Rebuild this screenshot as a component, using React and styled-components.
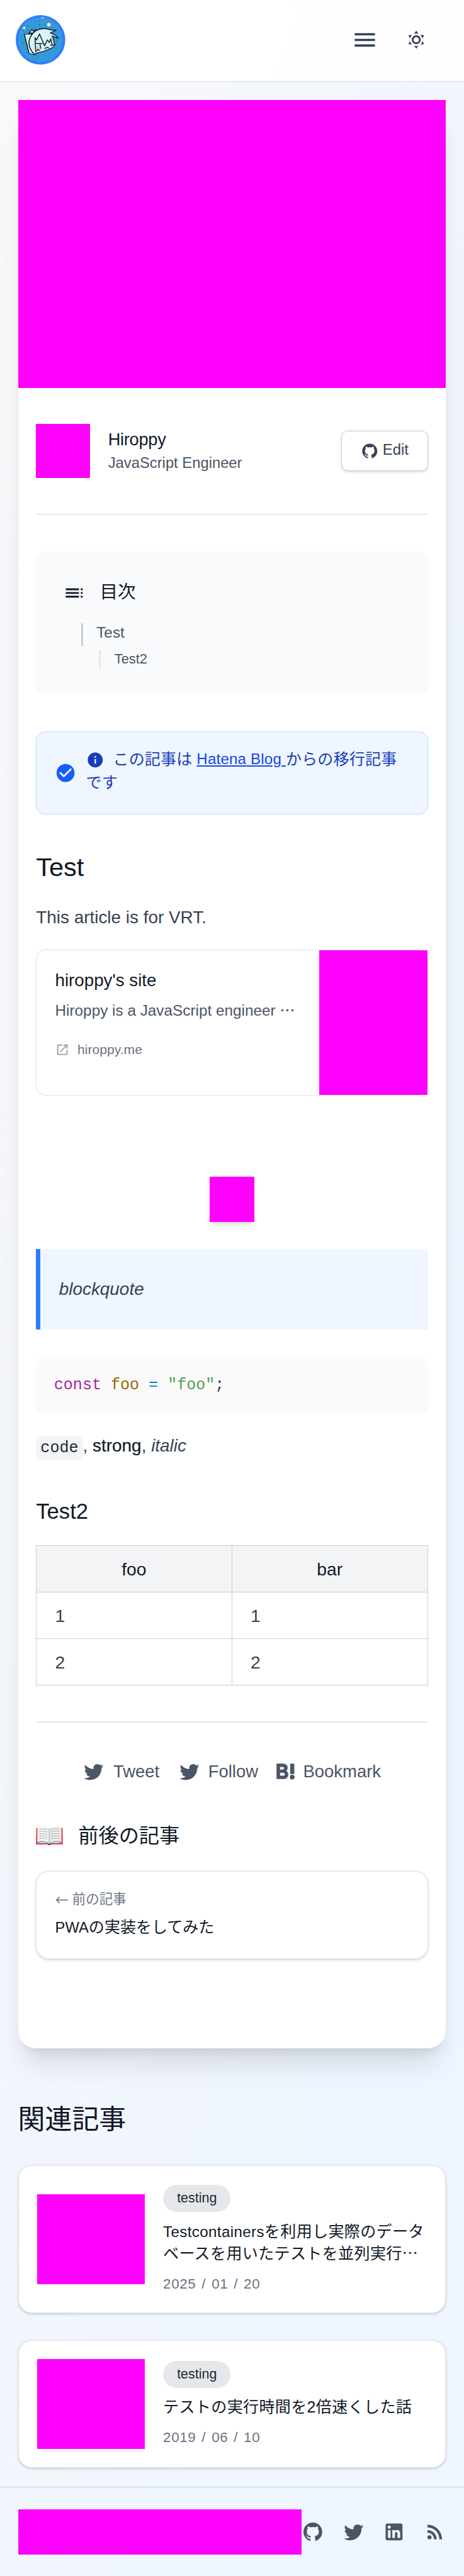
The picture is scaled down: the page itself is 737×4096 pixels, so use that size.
import React from "react";
import styled, { createGlobalStyle, css } from "styled-components";
import { MdMenu, MdToc, MdCheckCircle, MdInfo, MdOpenInNew, MdRssFeed } from "react-icons/md";

/* design units (16 to the rem) */
const r = (n) => `${n / 16}rem`;

const c = {
  ink: "#101828",
  dark: "#364153",
  mid: "#4a5565",
  soft: "#6a7282",
  line: "#e5e7eb",
  edge: "#dfe1e6",
  rule: "#c8cdd5",
  block: "#ff00ff",
};

const Global = createGlobalStyle`
  html { font-size: 28.6213px; }
  *, *::before, *::after { box-sizing: border-box; }
  body {
    margin: 0;
    font-family: "Liberation Sans", "Noto Sans CJK JP", sans-serif;
    font-size: ${r(16)};
    color: ${c.ink};
    -webkit-font-smoothing: antialiased;
  }
  h1, h2, h3, h4, p, pre, blockquote, ul { margin: 0; padding: 0; font-weight: 400; }
  ul { list-style: none; }
  a { color: inherit; text-decoration: none; }
  svg { display: block; flex: none; }
`;

const Page = styled.div`
  height: 4096px;
  overflow: hidden;
  display: flex;
  flex-direction: column;
  background: linear-gradient(to bottom right, #f9fafb, #f3f6fc 40%, #eff6ff 75%, #eff6ff);
`;

const Header = styled.header`
  display: flex;
  align-items: center;
  flex: none;
  height: ${r(73)};
  padding: 0 ${r(32.8)} ${r(1)} ${r(14)};
  background: rgba(255, 255, 255, 0.9);
  border-bottom: 2px solid ${c.line};
  color: ${c.dark};
`;

const Logo = styled.a`
  width: ${r(44)};
  height: ${r(44)};
  margin-right: auto;
`;

const SunSlot = styled.button`
  all: unset;
  margin-left: ${r(24)};
`;

const Svg = styled.svg`
  width: ${(p) => r(p.$size)};
  height: ${(p) => r(p.$size)};
  fill: currentColor;
`;

const Article = styled.article`
  flex: none;
  height: ${r(1732)};
  margin: ${r(16)} ${r(16)} 0;
  background: #fff;
  border-radius: 0 0 ${r(16)} ${r(16)};
  box-shadow: 0 ${r(20)} ${r(25)} ${r(-5)} rgba(0, 0, 0, 0.1), 0 ${r(8)} ${r(10)} ${r(-6)} rgba(0, 0, 0, 0.1);
`;

const Media = styled.div`
  flex: none;
  width: ${(p) => (p.$w ? r(p.$w) : "auto")};
  height: ${(p) => r(p.$h)};
  background: ${c.block};
`;

const Content = styled.div`
  display: flex;
  flex-direction: column;
  padding: ${r(32)} ${r(16)} 0;
`;

const Author = styled.div`
  display: flex;
  align-items: center;
  height: ${r(48)};
`;

const AuthorText = styled.div`
  flex: 1;
  padding-left: ${r(16)};
`;

const Name = styled.div`
  font-size: ${r(15.2)};
  line-height: ${r(20)};
  letter-spacing: -0.01em;
`;

const Role = styled.div`
  padding-top: ${r(0.5)};
  font-size: ${r(13.3)};
  line-height: ${r(20)};
  color: ${c.mid};
`;

const EditButton = styled.a`
  display: flex;
  align-items: center;
  justify-content: center;
  gap: ${r(3.5)};
  width: ${r(77)};
  height: ${r(36)};
  color: ${c.dark};
  background: #fff;
  border: 1px solid ${c.rule};
  border-radius: ${r(6)};
  box-shadow: 0 ${r(1)} ${r(3)} rgba(0, 0, 0, 0.1), 0 ${r(1)} ${r(2)} ${r(-1)} rgba(0, 0, 0, 0.1);
  font-size: ${r(13.4)};

  span { padding-bottom: ${r(2.4)}; }
`;

const Divider = styled.div`
  height: 2px;
  margin-top: ${(p) => r(p.$top)};
  background: ${c.line};
`;

const Toc = styled.nav`
  margin-top: ${r(31.9)};
  height: ${r(128)};
  padding: ${r(25.5)} ${r(24)} 0;
  background: #f9fafb;
  border-radius: ${r(8)};
`;

const TocTitle = styled.div`
  display: flex;
  align-items: center;
  gap: ${r(12.6)};
  height: ${r(22)};
  font-size: ${r(16)};
  line-height: ${r(22)};
  svg { margin-top: ${r(1.4)}; }
`;

const TocItem = styled.li`
  height: ${(p) => r(p.$h)};
  margin-top: ${(p) => r(p.$top)};
  margin-left: ${(p) => r(p.$indent)};
  padding-left: ${r(12)};
  border-left: ${r(2)} solid ${(p) => p.$bar};
  font-size: ${(p) => r(p.$font)};
  line-height: ${(p) => r(p.$lh)};
  color: ${c.mid};
`;

const Notice = styled.div`
  display: flex;
  align-items: center;
  margin-top: ${r(32)};
  height: ${r(74)};
  padding: 0 ${r(16)};
  background: #eff6ff;
  border: 1px solid #bedbff;
  border-radius: ${r(8)};
  color: #155dfc;
`;

const NoticeText = styled.div`
  height: ${r(44.8)};
  margin-left: ${r(8.6)};
  flex: 1;
  font-size: ${r(14)};
  line-height: ${r(20.6)};
  letter-spacing: ${r(0.1)};
  color: #193cb8;
`;

const NoticeLine = styled.div`
  display: flex;
  align-items: center;
  height: ${r(20.6)};
  white-space: pre;
  svg { margin: ${r(1.6)} ${r(8)} 0 0; }
`;

const NoticeLink = styled.a`
  margin-left: ${r(3.8)};
  color: #1447e6;
  font-size: ${r(13.5)};
  text-decoration: underline;
  text-underline-offset: ${r(1.2)};
`;

const Heading = styled.h2`
  display: flex;
  align-items: center;
  flex: none;
  height: ${(p) => r(p.$h || 28)};
  margin-top: ${(p) => r(p.$top)};
  margin-left: ${(p) => r(p.$left || 0)};
  font-size: ${(p) => r(p.$font)};
  line-height: 1;
`;

const Paragraph = styled.p`
  margin-top: ${(p) => r(p.$top)};
  height: ${r(28)};
  font-size: ${r(15.6)};
  line-height: ${r(28)};
  color: ${c.dark};
  white-space: nowrap;
`;

const LinkCard = styled.a`
  display: flex;
  justify-content: space-between;
  height: ${r(130)};
  margin-top: ${r(14.5)};
  border: 1px solid ${c.edge};
  border-radius: ${r(8)};
  & > ${Media} { height: ${r(129)}; }
`;

const LinkBody = styled.div`
  padding: ${r(17)} 0 0 ${r(16.4)};
`;

const LinkTitle = styled.div`
  font-size: ${r(15.5)};
  line-height: ${r(20)};
`;

const LinkText = styled.div`
  margin-top: ${r(6.6)};
  font-size: ${r(13.6)};
  line-height: ${r(20)};
  white-space: nowrap;
  color: ${c.mid};
`;

const LinkHost = styled.div`
  display: flex;
  align-items: center;
  gap: ${r(7.4)};
  margin-top: ${r(17.2)};
  height: ${r(16)};
  font-size: ${r(11.8)};
  line-height: ${r(16)};
  color: ${c.soft};
  svg { color: #99a1af; }
`;

const Figure = styled.div`
  align-self: center;
  margin-top: ${r(72)};
  box-shadow: 0 ${r(4)} ${r(6)} ${r(-1)} rgba(0, 0, 0, 0.12), 0 ${r(2)} ${r(4)} ${r(-2)} rgba(0, 0, 0, 0.1);
`;

const Quote = styled.blockquote`
  height: ${r(72)};
  margin-top: ${r(24)};
  padding-left: ${r(16.5)};
  border-left: ${r(4)} solid #2b7fff;
  background: #eff6ff;
  font-size: ${r(15.6)};
  line-height: ${r(72)};
  font-style: italic;
  color: ${c.dark};
`;

const Pre = styled.pre`
  height: ${r(52)};
  margin-top: ${r(24)};
  padding: 0 ${r(16)};
  border-radius: ${r(8)};
  background: #fafafa;
  color: #383a42;
  font-family: "Liberation Mono", monospace;
  font-size: ${r(14)};
  line-height: ${r(51.4)};
`;

const Tok = styled.span`
  color: ${(p) => p.$c};
`;

const Code = styled.code`
  padding: ${r(2)} ${r(4)} ${r(3)};
  border-radius: ${r(4)};
  background: #f3f4f6;
  color: #1e2939;
  font-family: "Liberation Mono", monospace;
  font-size: ${r(14)};
`;

const Strong = styled.strong`
  font-weight: 400;
  color: ${c.ink};
  -webkit-text-stroke: 0.2px ${c.ink};
`;

const Table = styled.div`
  display: grid;
  grid-template-columns: ${r(173.5)} 1fr;
  margin-top: ${r(16.3)};
  height: ${r(124.2)};
  grid-template-rows: repeat(3, 1fr);
  border: solid ${c.rule};
  border-width: 1px 0 0 1px;
`;

const Cell = styled.div`
  display: flex;
  align-items: center;
  padding: ${r(1)} ${r(16.4)} 0;
  border: solid ${c.rule};
  border-width: 0 1px 1px 0;
  font-size: ${r(15.8)};
  color: ${c.dark};
  ${(p) => p.$head && css`
    justify-content: center;
    background: #f3f4f6;
    color: ${c.ink};
  `}
`;

const Share = styled.div`
  display: flex;
  align-items: center;
  margin-top: ${r(31.8)};
  height: ${r(24)};
  padding-left: ${r(41)};
  color: ${c.mid};
  font-size: ${r(15.35)};
`;

const ShareLink = styled.a`
  display: flex;
  align-items: center;
  gap: ${(p) => r(p.$gap)};
  width: ${(p) => r(p.$w)};
  white-space: nowrap;
`;

const PrevCard = styled.a`
  height: ${r(78.3)};
  margin-top: ${r(17.3)};
  padding: ${r(15.9)} ${r(16.4)} 0;
  border: 1px solid ${c.edge};
  border-radius: ${r(12)};
  box-shadow: 0 ${r(1)} ${r(3)} rgba(0, 0, 0, 0.12), 0 ${r(1)} ${r(2)} ${r(-1)} rgba(0, 0, 0, 0.12);
`;

const PrevLabel = styled.div`
  display: flex;
  align-items: center;
  gap: ${r(3.2)};
  height: ${r(18)};
  font-size: ${r(12)};
  line-height: ${r(18)};
  color: ${c.soft};
`;

const Arrow = styled.span`
  font-family: "Noto Sans CJK JP", sans-serif;
`;

const PrevTitle = styled.div`
  margin-top: ${r(5.8)};
  font-size: ${r(14)};
  line-height: ${r(20)};
`;

const Latin = styled.span`
  font-size: ${(p) => p.$size || 0.95}em;
`;

const Card = styled.a`
  display: flex;
  align-items: center;
  flex: none;
  height: ${(p) => r(p.$h)};
  margin: ${(p) => r(p.$top)} ${r(16)} 0;
  padding: 0 ${r(16.3)};
  background: #fff;
  border: 1px solid ${c.edge};
  border-radius: ${r(12)};
  box-shadow: 0 ${r(1)} ${r(3)} rgba(0, 0, 0, 0.12), 0 ${r(1)} ${r(2)} ${r(-1)} rgba(0, 0, 0, 0.12);
`;

const CardBody = styled.div`
  display: flex;
  flex-direction: column;
  align-items: flex-start;
  margin-left: ${r(16)};
`;

const Badge = styled.span`
  display: flex;
  align-items: center;
  justify-content: center;
  width: ${r(60)};
  height: ${r(24)};
  border-radius: ${r(12)};
  background: ${c.line};
  color: #1e2939;
  font-size: ${r(12)};
`;

const CardTitle = styled.div`
  margin-top: ${r(7.4)};
  font-size: ${r(14)};
  line-height: ${r(20)};
  letter-spacing: ${r(0.2)};
  white-space: nowrap;
`;

const DateText = styled.div`
  margin-top: ${r(9)};
  font-size: ${r(12.5)};
  line-height: ${r(16)};
  letter-spacing: ${r(0.35)};
  word-spacing: ${r(1.2)};
  color: ${c.soft};
`;

const Footer = styled.footer`
  display: flex;
  align-items: center;
  margin-top: ${r(16.4)};
  border-top: 3px solid ${c.line};
  height: ${r(80)};
  padding: 0 ${r(16)};
  color: ${c.mid};
`;

const Social = styled.div`
  display: flex;
  gap: ${r(16)};
`;

const P = {
  github:
    "M12,2A10,10 0 0,0 2,12C2,16.42 4.87,20.17 8.84,21.5C9.34,21.58 9.5,21.27 9.5,21C9.5,20.77 9.5,20.14 9.5,19.31C6.73,19.91 6.14,17.97 6.14,17.97C5.68,16.81 5.03,16.5 5.03,16.5C4.12,15.88 5.1,15.9 5.1,15.9C6.1,15.97 6.63,16.93 6.63,16.93C7.5,18.45 8.97,18 9.54,17.76C9.63,17.11 9.89,16.67 10.17,16.42C7.95,16.17 5.62,15.31 5.62,11.5C5.62,10.39 6,9.5 6.65,8.79C6.55,8.54 6.2,7.5 6.75,6.15C6.75,6.15 7.59,5.88 9.5,7.17C10.29,6.95 11.15,6.84 12,6.84C12.85,6.84 13.71,6.95 14.5,7.17C16.41,5.88 17.25,6.15 17.25,6.15C17.8,7.5 17.45,8.54 17.35,8.79C18,9.5 18.38,10.39 18.38,11.5C18.38,15.32 16.04,16.16 13.81,16.41C14.17,16.72 14.5,17.33 14.5,18.26C14.5,19.6 14.5,20.68 14.5,21C14.5,21.27 14.66,21.59 15.17,21.5C19.14,20.16 22,16.42 22,12A10,10 0 0,0 12,2Z",
  twitter:
    "M22.46,6C21.69,6.35 20.86,6.58 20,6.69C20.88,6.16 21.56,5.32 21.88,4.31C21.05,4.81 20.13,5.16 19.16,5.36C18.37,4.5 17.26,4 16,4C13.65,4 11.73,5.92 11.73,8.29C11.73,8.63 11.77,8.96 11.84,9.27C8.28,9.09 5.11,7.38 3,4.79C2.63,5.42 2.42,6.16 2.42,6.94C2.42,8.43 3.17,9.75 4.33,10.5C3.62,10.5 2.96,10.3 2.38,10C2.38,10 2.38,10 2.38,10.03C2.38,12.11 3.86,13.85 5.82,14.24C5.46,14.34 5.08,14.39 4.69,14.39C4.42,14.39 4.15,14.36 3.89,14.31C4.43,16 6,17.26 7.89,17.29C6.43,18.45 4.58,19.13 2.56,19.13C2.22,19.13 1.88,19.11 1.54,19.07C3.44,20.29 5.7,21 8.12,21C16,21 20.33,14.46 20.33,8.79C20.33,8.6 20.33,8.42 20.32,8.23C21.16,7.63 21.88,6.87 22.46,6Z",
  linkedin:
    "M19 3A2 2 0 0 1 21 5V19A2 2 0 0 1 19 21H5A2 2 0 0 1 3 19V5A2 2 0 0 1 5 3H19M18.5 18.5V13.2A3.26 3.26 0 0 0 15.24 9.94C14.39 9.94 13.4 10.46 12.92 11.24V10.13H10.13V18.5H12.92V13.57C12.92 12.8 13.54 12.17 14.31 12.17A1.4 1.4 0 0 1 15.71 13.57V18.5H18.5M6.88 8.56A1.68 1.68 0 0 0 8.56 6.88C8.56 5.95 7.81 5.19 6.88 5.19A1.69 1.69 0 0 0 5.19 6.88C5.19 7.81 5.95 8.56 6.88 8.56M8.27 18.5V10.13H5.5V18.5H8.27Z",
  sun:
    "M12,7A5,5 0 0,1 17,12A5,5 0 0,1 12,17A5,5 0 0,1 7,12A5,5 0 0,1 12,7M12,9A3,3 0 0,0 9,12A3,3 0 0,0 12,15A3,3 0 0,0 15,12A3,3 0 0,0 12,9M12,2L14.39,5.42C13.65,5.15 12.84,5 12,5C11.16,5 10.35,5.15 9.61,5.42L12,2M3.34,7L7.5,6.65C6.9,7.16 6.36,7.78 5.94,8.5C5.5,9.24 5.25,10 5.11,10.79L3.34,7M3.36,17L5.12,13.23C5.26,14 5.53,14.78 5.95,15.5C6.37,16.24 6.91,16.86 7.5,17.37L3.36,17M20.65,7L18.88,10.79C18.74,10 18.47,9.23 18.05,8.5C17.63,7.78 17.1,7.15 16.5,6.64L20.65,7M20.64,17L16.5,17.36C17.09,16.85 17.62,16.22 18.04,15.5C18.46,14.77 18.73,14 18.87,13.21L20.64,17M12,22L9.59,18.56C10.33,18.83 11.14,19 12,19C12.82,19 13.63,18.83 14.37,18.56L12,22Z",
};

const Icon = ({ name, size }) => (
  <Svg viewBox="0 0 24 24" $size={size} aria-hidden="true">
    <path d={P[name]} />
  </Svg>
);

const HatenaIcon = () => (
  <Svg viewBox="0 0 20 20" $size={20} aria-hidden="true">
    <text x="1.1" y="16.4" fontFamily="Liberation Sans" fontWeight="700" fontSize="18.6" textLength="11.4" lengthAdjust="spacingAndGlyphs" stroke="currentColor" strokeWidth="0.9">B</text>
    <rect x="13.9" y="3" width="3.7" height="9.2" />
    <circle cx="15.75" cy="15" r="2.1" />
  </Svg>
);

const Avatar = () => (
  <Svg viewBox="110 80 346 346" $size={44} aria-hidden="true">
    <circle cx="283" cy="253" r="173" fill="#2b7fff" />
    <circle cx="283" cy="253" r="157" fill="#3498db" />
    <g fill="#dff2f2" stroke="#6a8c96" strokeWidth="4">
      <circle cx="169" cy="170" r="11" />
      <circle cx="341" cy="147" r="15" />
      <path d="M280 97 Q296 114 313 99 L313 97Z" />
    </g>
    <g fill="#2f6f97">
      <circle cx="194" cy="156" r="5" /><circle cx="163" cy="188" r="5" /><circle cx="278" cy="115" r="4" />
      <circle cx="277" cy="147" r="5" /><circle cx="351" cy="168" r="4" /><circle cx="161" cy="274" r="5" />
      <circle cx="396" cy="266" r="5" />
    </g>
    <g fill="#d5f3f8" stroke="#1b2a30" strokeWidth="7" strokeLinejoin="round" strokeLinecap="round">
      <path d="M201 206 L222 182 L236 194 L246 182 L255 184 L240 206Z" />
      <path d="M202 346 L170 214 L218 214 L240 200 L250 340 L243 358Z" strokeWidth="5" />
      <path d="M243 358 Q190 305 206 248 Q235 172 318 174 L350 182 L392 186 L352 204 Q400 222 406 243 L364 226 Q380 262 382 292 Q370 318 252 347Z" />
    </g>
    <path d="M252 300 Q280 290 284 320 L258 342Z M350 290 Q360 262 378 290 L365 306Z" fill="#dcc3df" />
    <path d="M202 346 L170 214 M244 236 L250 340 M244 236 L255 254 L276 212 L311 295 L331 253 L345 272 L354 246 L364 284 M250 279 L297 279 M278 279 L286 315 M256 330 Q266 315 278 328 M312 317 Q326 298 342 312 M352 292 L386 286" fill="none" stroke="#1b2a30" strokeWidth="7" strokeLinejoin="round" />
  </Svg>
);

const BookIcon = () => (
  <Svg viewBox="0 -3.5 24 24" $size={24} aria-hidden="true">
    <path d="M0.4 1.3 L1.5 1 V14.6 L11 14.8 H13 L22.5 14.6 V1 L23.6 1.3 L24 16 L13.2 16 Q12 17 10.8 16 L0 16Z" fill="#e53935" />
    <path d="M1 14.9 Q7 12.6 11.6 15.6 H12.4 Q17 12.6 23 14.9 L22.6 12 H1.4Z" fill="#5bbad0" />
    <path d="M10.7 15.4 H13.3 L12.8 16.6 H11.2Z" fill="#4e4340" />
    <path d="M1.5 0.8 Q7.5 -1 12 1.6 V14.8 Q7 11.6 1.3 13.6Z" fill="#f5f5f5" />
    <path d="M22.5 0.8 Q16.5 -1 12 1.6 V14.8 Q17 11.6 22.7 13.6Z" fill="#ededed" />
    <path d="M11.3 1.4 L12 1.8 L12.7 1.4 V14.4 L12 14.8 L11.3 14.4Z" fill="#c9c9c9" />
    <path d="M3 2.6 Q7 1.4 10.4 2.9 M3 4.7 Q7 3.5 10.4 5 M3 6.8 Q7 5.6 10.4 7.1 M3 8.9 Q7 7.7 10.4 9.2 M3 11 Q7 9.8 10.4 11.3 M13.6 2.9 Q17 1.4 21 2.6 M13.6 5 Q17 3.5 21 4.7 M13.6 7.1 Q17 5.6 21 6.8 M13.6 9.2 Q17 7.7 21 8.9 M13.6 11.3 Q17 9.8 21 11" fill="none" stroke="#a9a9a9" strokeWidth="0.6" strokeDasharray="2.2 0.4" />
  </Svg>
);

const BookSlot = styled.span`
  width: ${r(37.5)};
  padding-top: ${r(1)};
`;

export default function App() {
  return (
    <>
      <Global />
      <Page lang="ja">
        <Header>
          <Logo href="#"><Avatar /></Logo>
          <MdMenu size="1.5rem" />
          <SunSlot aria-label="theme"><Icon name="sun" size={19.2} /></SunSlot>
        </Header>

        <Article>
          <Media $h={256} />
          <Content>
            <Author>
              <Media $w={48} $h={48} />
              <AuthorText>
                <Name>Hiroppy</Name>
                <Role>JavaScript Engineer</Role>
              </AuthorText>
              <EditButton href="#"><Icon name="github" size={16} /><span>Edit</span></EditButton>
            </Author>
            <Divider $top={32} />

            <Toc>
              <TocTitle><MdToc size="1.25rem" color={c.ink} />目次</TocTitle>
              <ul>
                <TocItem $h={20.3} $lh={17.2} $top={16.5} $indent={16} $bar={c.rule} $font={13.6}>Test</TocItem>
                <TocItem $h={16} $lh={15.6} $top={3.8} $indent={32} $bar={c.line} $font={12.2}>Test2</TocItem>
              </ul>
            </Toc>

            <Notice>
              <MdCheckCircle size="1.2rem" />
              <NoticeText>
                <NoticeLine>
                  <MdInfo size="1rem" />
                  <span>この記事は</span>
                  <NoticeLink href="#">Hatena Blog </NoticeLink>
                  <span>からの移行記事</span>
                </NoticeLine>
                <NoticeLine>です</NoticeLine>
              </NoticeText>
            </Notice>

            <Heading $top={31} $h={32} $font={23.2}>Test</Heading>
            <Paragraph $top={14.5}>This article is for VRT.</Paragraph>

            <LinkCard href="#">
              <LinkBody>
                <LinkTitle>hiroppy's site</LinkTitle>
                <LinkText>Hiroppy is a JavaScript engineer ⋯</LinkText>
                <LinkHost><MdOpenInNew size="0.78rem" />hiroppy.me</LinkHost>
              </LinkBody>
              <Media $w={96} $h={129} />
            </LinkCard>

            <Figure><Media $w={40} $h={40} /></Figure>
            <Quote>blockquote</Quote>
            <Pre><Tok $c="#a626a4">const</Tok> <Tok $c="#986801">foo</Tok> <Tok $c="#0184bc">=</Tok> <Tok $c="#50a14f">"foo"</Tok>;</Pre>
            <Paragraph $top={13.5}><Code>code</Code>, <Strong>strong</Strong>, <em>italic</em></Paragraph>

            <Heading as="h3" $top={30} $font={19.4}>Test2</Heading>
            <Table>
              <Cell $head>foo</Cell><Cell $head>bar</Cell>
              <Cell>1</Cell><Cell>1</Cell>
              <Cell>2</Cell><Cell>2</Cell>
            </Table>

            <Divider $top={32} />
            <Share>
              <ShareLink href="#" $w={85} $gap={7.6}><Icon name="twitter" size={20} />Tweet</ShareLink>
              <ShareLink href="#" $w={86} $gap={6.9}><Icon name="twitter" size={20} />Follow</ShareLink>
              <ShareLink href="#" $w={100} $gap={5.2}><HatenaIcon />Bookmark</ShareLink>
            </Share>

            <Heading as="h4" $top={31} $font={18}><BookSlot><BookIcon /></BookSlot>前後の記事</Heading>
            <PrevCard href="#">
              <PrevLabel><Arrow>←</Arrow><span>前の記事</span></PrevLabel>
              <PrevTitle><Latin>PWA</Latin>の実装をしてみた</PrevTitle>
            </PrevCard>
          </Content>
        </Article>

        <Heading $top={47} $h={32} $left={16} $font={24}>関連記事</Heading>
        <Card href="#" $top={25} $h={131}>
          <Media $w={96} $h={80} />
          <CardBody>
            <Badge>testing</Badge>
            <CardTitle><Latin $size={0.965}>Testcontainers</Latin>を利用し実際のデータ<br />ベースを用いたテストを並列実行⋯</CardTitle>
            <DateText>2025 / 01 / 20</DateText>
          </CardBody>
        </Card>
        <Card href="#" $top={24} $h={113.6}>
          <Media $w={96} $h={80} />
          <CardBody>
            <Badge>testing</Badge>
            <CardTitle>テストの実行時間を2倍速くした話</CardTitle>
            <DateText>2019 / 06 / 10</DateText>
          </CardBody>
        </Card>

        <Footer>
          <Media $w={252} $h={40} />
          <Social>
            <Icon name="github" size={20} />
            <Icon name="twitter" size={20} />
            <Icon name="linkedin" size={20} />
            <MdRssFeed size="1.25rem" />
          </Social>
        </Footer>
      </Page>
    </>
  );
}
